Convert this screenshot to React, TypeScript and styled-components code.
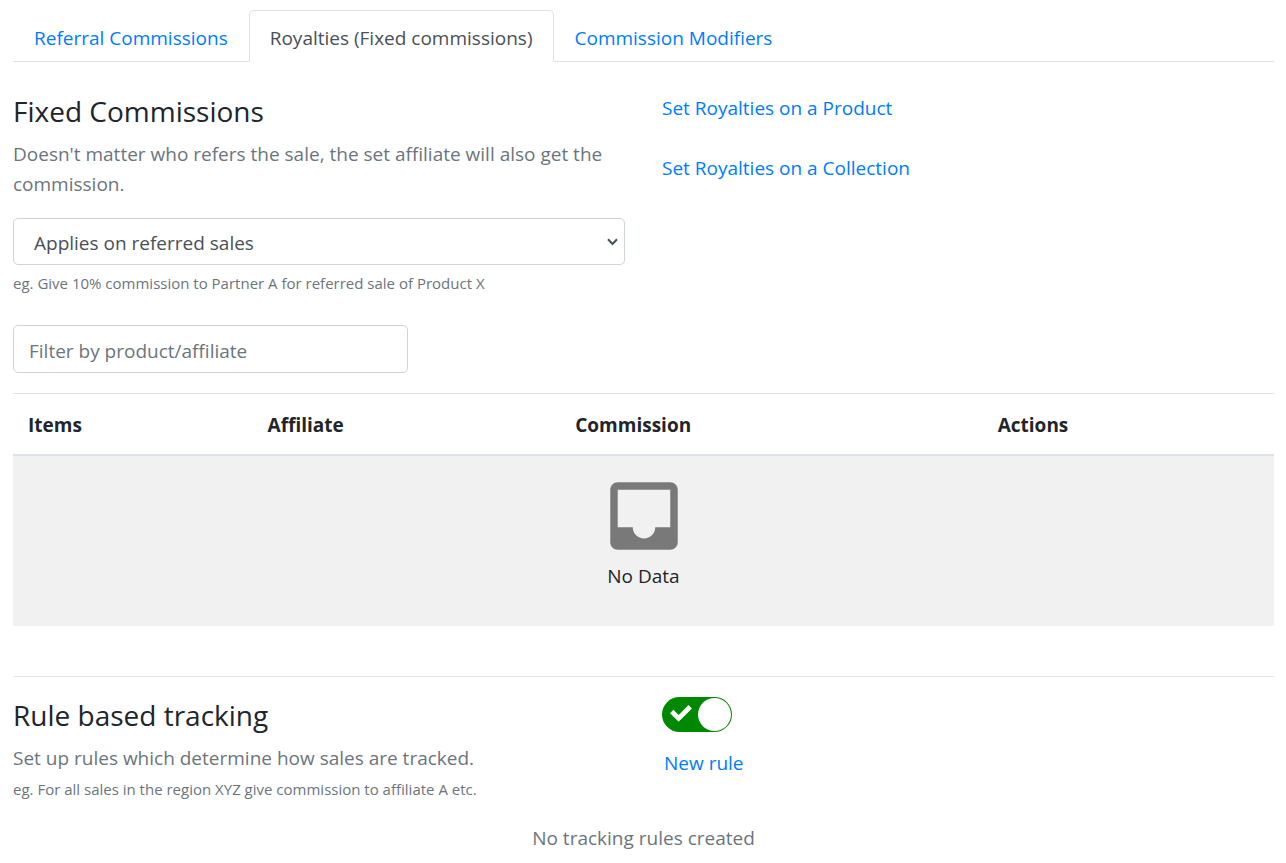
import React, { useState } from "react";
import styled, { createGlobalStyle } from "styled-components";

const GlobalStyle = createGlobalStyle`
  *, *::before, *::after { box-sizing: border-box; }
  body {
    margin: 0;
    background: #fff;
    color: #212529;
    font-family: "Open Sans", "Noto Sans", sans-serif;
    font-size: 19px;
    line-height: 30px;
  }
`;

const Page = styled.main`
  padding: 10px 12px 8px 13px;
`;

const TabList = styled.nav`
  display: flex;
  border-bottom: 1px solid #dee2e6;
`;

const Tab = styled.a<{ $active?: boolean }>`
  padding: 12px 20px 8px;
  margin-bottom: -1px;
  border: 1px solid transparent;
  border-radius: 5px 5px 0 0;
  text-decoration: none;
  color: ${(p) => (p.$active ? "#495057" : "#007bff")};
  ${(p) =>
    p.$active &&
    `
    background: #fff;
    border-color: #dee2e6 #dee2e6 #fff;
  `}
`;

const Columns = styled.section<{ $top: number }>`
  display: grid;
  grid-template-columns: 1fr 1fr;
  column-gap: 37px;
  padding-top: ${(p) => p.$top}px;
`;

const Title = styled.h2`
  margin: 0 0 10px;
  font-size: 28px;
  font-weight: 400;
  line-height: 36px;
`;

const Muted = styled.p`
  margin: 0;
  color: #6c757d;
`;

const Hint = styled.small`
  display: block;
  margin-top: 4px;
  font-size: 15px;
  line-height: 24px;
  color: #6c757d;
`;

const SelectFrame = styled.div`
  position: relative;
  margin: 19px 0 6px;
`;

const Select = styled.select`
  appearance: none;
  display: block;
  width: 100%;
  height: 47px;
  padding: 2px 30px 0 20px;
  border: 1px solid #ced4da;
  border-radius: 5px;
  background: #fff;
  color: #495057;
  font: inherit;
`;

const SelectArrow = styled.svg`
  position: absolute;
  right: 7px;
  top: 20px;
  fill: none;
  stroke: #495057;
  stroke-width: 2;
  pointer-events: none;
`;

const FilterInput = styled.input`
  display: block;
  width: 395px;
  max-width: 100%;
  height: 48px;
  margin: 30px 0 20px;
  padding: 10px 15px 6px;
  border: 1px solid #ced4da;
  border-radius: 5px;
  color: #495057;
  font: inherit;
  &::placeholder {
    color: #6c757d;
    opacity: 1;
  }
`;

const Actions = styled.div<{ $gap: number }>`
  display: flex;
  flex-direction: column;
  align-items: flex-start;
  gap: ${(p) => p.$gap}px;
`;

const Link = styled.a`
  color: #007bff;
  text-decoration: none;
`;

const LinkButton = styled.button`
  padding: 0 2px;
  border: 0;
  background: none;
  color: #007bff;
  font: inherit;
  cursor: pointer;
`;

const Table = styled.table`
  width: 100%;
  table-layout: fixed;
  border-collapse: separate;
  border-spacing: 0;
`;

const HeadCell = styled.th<{ $width: string }>`
  width: ${(p) => p.$width};
  padding: 16px 15px 14px;
  border-top: 1px solid #dee2e6;
  border-bottom: 2px solid #dee2e6;
  text-align: left;
  font-weight: 700;
`;

const EmptyCell = styled.td`
  padding: 15px 15px 35px;
  background: #f1f1f1;
  text-align: center;
`;

const InboxIcon = styled.svg`
  display: block;
  margin: 0 auto;
  fill: #797979;
`;

const Divider = styled.hr`
  margin: 50px 0 0;
  border: 0;
  border-top: 1px solid #e5e5e5;
`;

const SwitchFrame = styled.span`
  position: relative;
  display: block;
  width: 70px;
  height: 35px;
`;

const SwitchInput = styled.input`
  appearance: none;
  display: block;
  width: 70px;
  height: 35px;
  margin: 0;
  padding: 1px;
  border-radius: 18px;
  background: #888;
  cursor: pointer;
  &::before {
    content: "";
    display: block;
    width: 33px;
    height: 33px;
    border-radius: 50%;
    background: #fff;
  }
  &:checked {
    background: #080;
  }
  &:checked::before {
    margin-left: auto;
  }
`;

const SwitchCheck = styled.svg`
  position: absolute;
  left: 8px;
  top: 8px;
  fill: #fff;
  pointer-events: none;
`;

const EmptyNote = styled(Muted)`
  margin-top: 22px;
  text-align: center;
`;

const columns = [
  { name: "Items", width: "19%" },
  { name: "Affiliate", width: "24.4%" },
  { name: "Commission", width: "33.5%" },
  { name: "Actions", width: "23.1%" },
];

export default function App() {
  const [enabled, setEnabled] = useState(true);
  return (
    <>
      <GlobalStyle />
      <Page>
        <TabList aria-label="Commission settings">
          <Tab href="#referral">Referral Commissions</Tab>
          <Tab href="#royalties" $active aria-current="page">
            Royalties (Fixed commissions)
          </Tab>
          <Tab href="#modifiers">Commission Modifiers</Tab>
        </TabList>

        <Columns $top={31}>
          <div>
            <Title>Fixed Commissions</Title>
            <Muted>
              Doesn't matter who refers the sale, the set affiliate will also get the commission.
            </Muted>
            <SelectFrame>
              <Select aria-label="When fixed commissions apply" defaultValue="referred">
                <option value="referred">Applies on referred sales</option>
                <option value="all">Applies on all sales</option>
              </Select>
              <SelectArrow width="11" height="8" viewBox="0 0 11 8" aria-hidden="true">
                <path d="M1 1.2L5.5 6L10 1.2" />
              </SelectArrow>
            </SelectFrame>
            <Hint>eg. Give 10% commission to Partner A for referred sale of Product X</Hint>
          </div>
          <Actions $gap={30}>
            <Link href="#product">Set Royalties on a Product</Link>
            <Link href="#collection">Set Royalties on a Collection</Link>
          </Actions>
        </Columns>

        <FilterInput
          type="text"
          aria-label="Filter by product or affiliate"
          placeholder="Filter by product/affiliate"
        />

        <Table>
          <thead>
            <tr>
              {columns.map((c) => (
                <HeadCell key={c.name} scope="col" $width={c.width}>
                  {c.name}
                </HeadCell>
              ))}
            </tr>
          </thead>
          <tbody>
            <tr>
              <EmptyCell colSpan={4}>
                <InboxIcon width="90" height="90" viewBox="0 0 24 24" aria-hidden="true">
                  <path d="M19 3H4.99c-1.11 0-1.98.89-1.98 2L3 19c0 1.1.88 2 1.99 2H19c1.1 0 2-.9 2-2V5c0-1.11-.9-2-2-2zm0 12h-4c0 1.66-1.35 3-3 3s-3-1.34-3-3H4.99V5H19v10z" />
                </InboxIcon>
                No Data
              </EmptyCell>
            </tr>
          </tbody>
        </Table>

        <Divider />

        <Columns $top={20}>
          <div>
            <Title>Rule based tracking</Title>
            <Muted>Set up rules which determine how sales are tracked.</Muted>
            <Hint>eg. For all sales in the region XYZ give commission to affiliate A etc.</Hint>
          </div>
          <Actions $gap={16}>
            <SwitchFrame>
              <SwitchInput
                type="checkbox"
                role="switch"
                aria-label="Rule based tracking"
                checked={enabled}
                onChange={(e) => setEnabled(e.target.checked)}
              />
              {enabled && (
                <SwitchCheck width="22" height="17" viewBox="0 0 13.4 10.3" aria-hidden="true">
                  <path d="M11.264 0L5.26 6.004 2.103 2.847 0 4.95l5.26 5.26 8.108-8.107L11.264 0" />
                </SwitchCheck>
              )}
            </SwitchFrame>
            <LinkButton type="button">New rule</LinkButton>
          </Actions>
        </Columns>

        <EmptyNote>No tracking rules created</EmptyNote>
      </Page>
    </>
  );
}
